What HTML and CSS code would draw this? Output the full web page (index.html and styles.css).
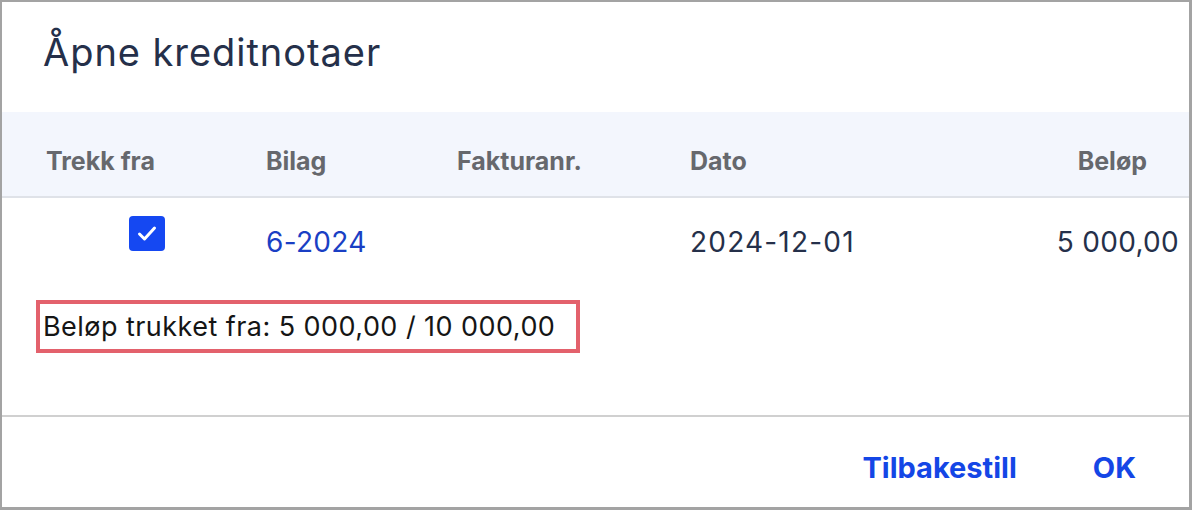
FILE: index.html
```html
<!DOCTYPE html>
<html lang="no">
<head>
<meta charset="utf-8">
<title>Åpne kreditnotaer</title>
<link rel="stylesheet" href="styles.css">
</head>
<body>
<div class="dialog">
  <h1 class="title">Åpne kreditnotaer</h1>
  <div class="grid head">
    <div class="c1">Trekk fra</div>
    <div>Bilag</div>
    <div>Fakturanr.</div>
    <div>Dato</div>
    <div class="amt">Beløp</div>
  </div>
  <div class="grid row">
    <div class="c1">
      <span class="check">
        <svg viewBox="0 0 36 35" width="36" height="35"><path d="M10.5 18 L15.5 23 L25.5 12" fill="none" stroke="#fff" stroke-width="3" stroke-linecap="round" stroke-linejoin="round"/></svg>
      </span>
    </div>
    <div class="cell link">6-2024</div>
    <div class="cell"></div>
    <div class="cell date">2024-12-01</div>
    <div class="cell amt">5 000,00</div>
  </div>
  <div class="summary-wrap">
    <div class="summary">Beløp trukket fra: 5 000,00 / 10 000,00</div>
  </div>
  <div class="footer">
    <button class="btn">Tilbakestill</button>
    <button class="btn">OK</button>
  </div>
</div>
</body>
</html>
```
FILE: styles.css
```css
html, body {
  margin: 0;
  padding: 0;
  background: #fff;
}
body {
  font-family: Inter, "Noto Sans", sans-serif;
  width: 1192px;
  height: 510px;
}
.dialog {
  box-sizing: border-box;
  width: 1192px;
  height: 510px;
  border-style: solid;
  border-color: #a3a3a3;
  border-width: 2px 3px 3px 2px;
  background: #fff;
  display: flex;
  flex-direction: column;
}
.title {
  margin: 0;
  height: 110px;
  box-sizing: border-box;
  padding: 27px 0 0 41px;
  font-size: 38px;
  font-weight: 400;
  letter-spacing: 0.95px;
  color: #25304a;
  line-height: 46px;
}
.grid {
  display: grid;
  grid-template-columns: 220px 191px 233px 1fr 1fr;
  padding-left: 44px;
  align-items: start;
}
.head {
  height: 86px;
  background: #f3f6fd;
  border-bottom: 2px solid #dfe2e8;
  padding-right: 42px;
  padding-top: 34px;
  box-sizing: border-box;
  font-size: 25px;
  line-height: 30px;
  font-weight: 700;
  color: #66686d;
}
.amt {
  text-align: right;
}
.row {
  padding-right: 10px;
  padding-top: 18px;
  font-size: 28px;
  letter-spacing: 0.3px;
  color: #25304a;
  height: 86px;
  box-sizing: border-box;
}
.cell {
  padding-top: 8px;
  line-height: 36px;
}
.date {
  letter-spacing: 1.2px;
}
.row .c1 {
  padding-left: 83px;
  line-height: 0;
}
.check {
  display: inline-block;
  width: 36px;
  height: 35px;
  border-radius: 4px;
  background: #1548f2;
}
.check svg {
  display: block;
}
.link {
  color: #1a3fc4;
}
.summary-wrap {
  box-sizing: border-box;
  padding: 16px 0 0 34px;
  height: 133px;
  border-bottom: 2px solid #d0d0d0;
}
.summary {
  display: inline-block;
  border: 4px solid #e3616c;
  padding: 7px 21px 7px 3px;
  font-family: Inter, "Noto Sans", sans-serif;
  font-size: 27px;
  letter-spacing: 0.45px;
  line-height: 31px;
  color: #151515;
}
.footer {
  flex: 1;
  display: flex;
  justify-content: flex-end;
  align-items: center;
  gap: 44px;
  padding-right: 37px;
  padding-top: 12px;
}
.btn {
  background: none;
  border: none;
  padding: 0 16px;
  font-family: Inter, "Noto Sans", sans-serif;
  font-size: 29px;
  line-height: 36px;
  font-weight: 700;
  color: #1446e6;
  cursor: pointer;
}
```
